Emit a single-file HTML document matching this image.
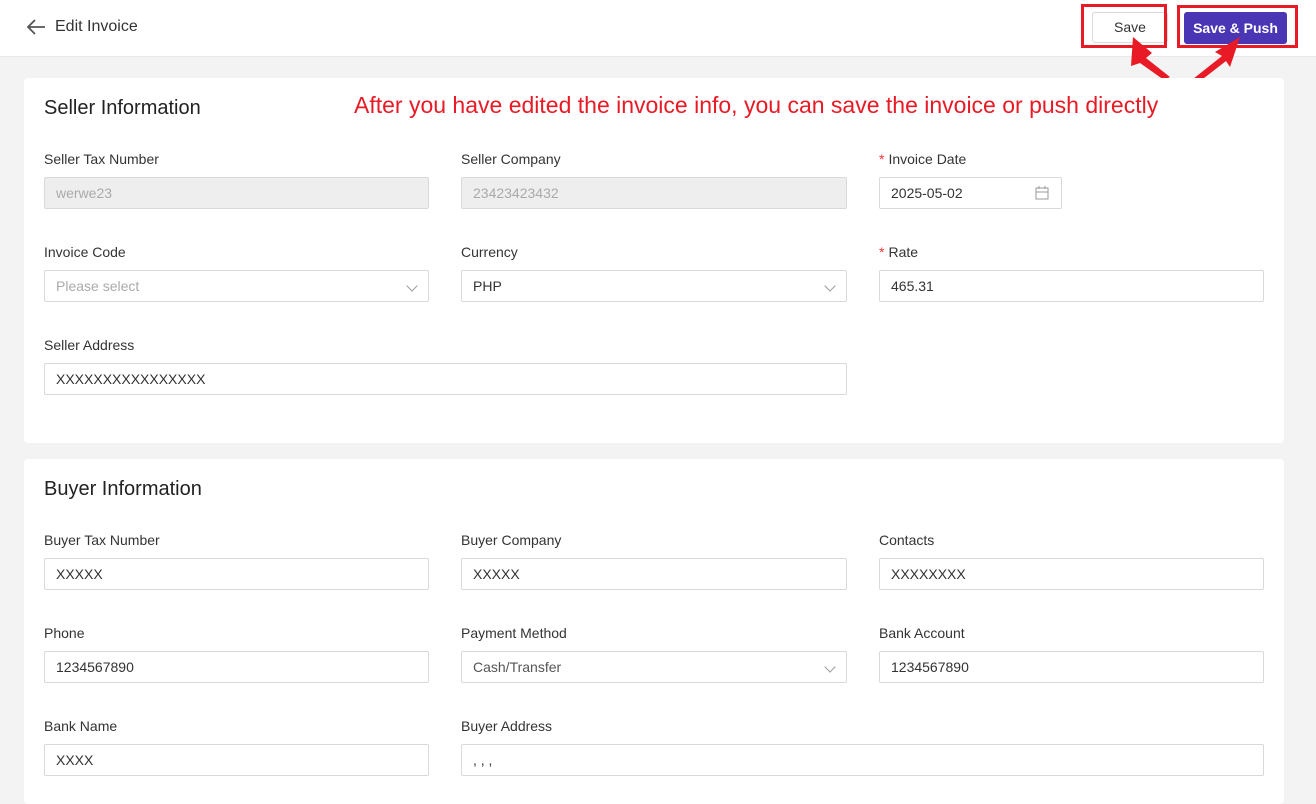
<!DOCTYPE html><html><head><style>
body{margin:0;width:1316px;height:798px;overflow:hidden;background:#f3f3f3;font-family:"Liberation Sans",sans-serif;position:relative;color:#333}
.hdr{position:absolute;left:0;top:0;width:1316px;height:56px;background:#fff;border-bottom:1px solid #e8e8e8}
.card{position:absolute;left:24px;width:1260px;background:#fff;border-radius:4px}
.t{position:absolute;font-size:20px;color:#222}
.l{position:absolute;font-size:14px;color:#333}
.l b{color:#e33;font-weight:normal;margin-right:4px}
.i{position:absolute;height:30px;border:1px solid #d9d9d9;border-radius:2px;box-sizing:border-box;height:32px;padding-left:11px;line-height:30px;font-size:14px;color:#333;background:#fff}
.d{background:#eee;color:#aaa}
.p{color:#aaa}
.ch{position:absolute;right:12px;top:11px;width:7px;height:7px;border-right:1px solid #999;border-bottom:1px solid #999;transform:rotate(45deg)}
</style></head><body>
<div class="hdr">
<svg style="position:absolute;left:26px;top:18px" width="20" height="18"><path d="M19 9H2M9 2L2 9l7 7" stroke="#555" stroke-width="1.8" fill="none"/></svg>
<div style="position:absolute;left:55px;top:18px;font-size:16px;color:#333">Edit Invoice</div>
<div style="position:absolute;left:1092px;top:12px;width:76px;height:31px;border:1px solid #d9d9d9;border-radius:3px;box-sizing:border-box;text-align:center;line-height:29px;font-size:14px">Save</div>
<div style="position:absolute;left:1184px;top:12px;width:103px;height:32px;background:#4a35b5;border-radius:3px;color:#fff;text-align:center;line-height:32px;font-size:14px;font-weight:bold">Save &amp; Push</div>
<div style="position:absolute;left:1081px;top:4px;width:86px;height:44px;border:3px solid #e81a25;box-sizing:border-box"></div>
<div style="position:absolute;left:1177px;top:5px;width:121px;height:43px;border:3px solid #e81a25;box-sizing:border-box"></div>
</div>
<svg style="position:absolute;left:0;top:0" width="1316" height="90"><polygon points="1133,37 1131,66 1140,63 1164,80 1170,77 1146,58 1152,53" fill="#e81a25"/><polygon points="1240,37 1215,52 1222,56 1193,79 1199,82 1226,61 1230,67" fill="#e81a25"/></svg>
<div class="card" style="top:78px;height:365px"></div>
<div class="card" style="top:459px;height:345px"></div>
<div class="t" style="left:44px;top:97px">Seller Information</div>
<div style="position:absolute;left:354px;top:92px;font-size:23px;color:#e81a25">After you have edited the invoice info, you can save the invoice or push directly</div>
<div class="l" style="left:44px;top:151px">Seller Tax Number</div><div class="i d" style="left:44px;top:177px;width:385px">werwe23</div>
<div class="l" style="left:461px;top:151px">Seller Company</div><div class="i d" style="left:461px;top:177px;width:386px">23423423432</div>
<div class="l" style="left:879px;top:151px"><b>*</b>Invoice Date</div><div class="i" style="left:879px;top:177px;width:183px">2025-05-02<svg style="position:absolute;right:12px;top:8px" width="14" height="14"><rect x="1" y="2" width="12" height="11" fill="none" stroke="#999"/><path d="M1 6h12M4 0v3M10 0v3" stroke="#999"/></svg></div>
<div class="l" style="left:44px;top:244px">Invoice Code</div><div class="i p" style="left:44px;top:270px;width:385px">Please select<span class="ch"></span></div>
<div class="l" style="left:461px;top:244px">Currency</div><div class="i" style="left:461px;top:270px;width:386px">PHP<span class="ch"></span></div>
<div class="l" style="left:879px;top:244px"><b>*</b>Rate</div><div class="i" style="left:879px;top:270px;width:385px">465.31</div>
<div class="l" style="left:44px;top:337px">Seller Address</div><div class="i" style="left:44px;top:363px;width:803px">XXXXXXXXXXXXXXXX</div>
<div class="t" style="left:44px;top:478px">Buyer Information</div>
<div class="l" style="left:44px;top:532px">Buyer Tax Number</div><div class="i" style="left:44px;top:558px;width:385px">XXXXX</div>
<div class="l" style="left:461px;top:532px">Buyer Company</div><div class="i" style="left:461px;top:558px;width:386px">XXXXX</div>
<div class="l" style="left:879px;top:532px">Contacts</div><div class="i" style="left:879px;top:558px;width:385px">XXXXXXXX</div>
<div class="l" style="left:44px;top:625px">Phone</div><div class="i" style="left:44px;top:651px;width:385px">1234567890</div>
<div class="l" style="left:461px;top:625px">Payment Method</div><div class="i" style="left:461px;top:651px;width:386px;color:#555">Cash/Transfer<span class="ch"></span></div>
<div class="l" style="left:879px;top:625px">Bank Account</div><div class="i" style="left:879px;top:651px;width:385px">1234567890</div>
<div class="l" style="left:44px;top:718px">Bank Name</div><div class="i" style="left:44px;top:744px;width:385px">XXXX</div>
<div class="l" style="left:461px;top:718px">Buyer Address</div><div class="i" style="left:461px;top:744px;width:803px">, , ,</div>
</body></html>
